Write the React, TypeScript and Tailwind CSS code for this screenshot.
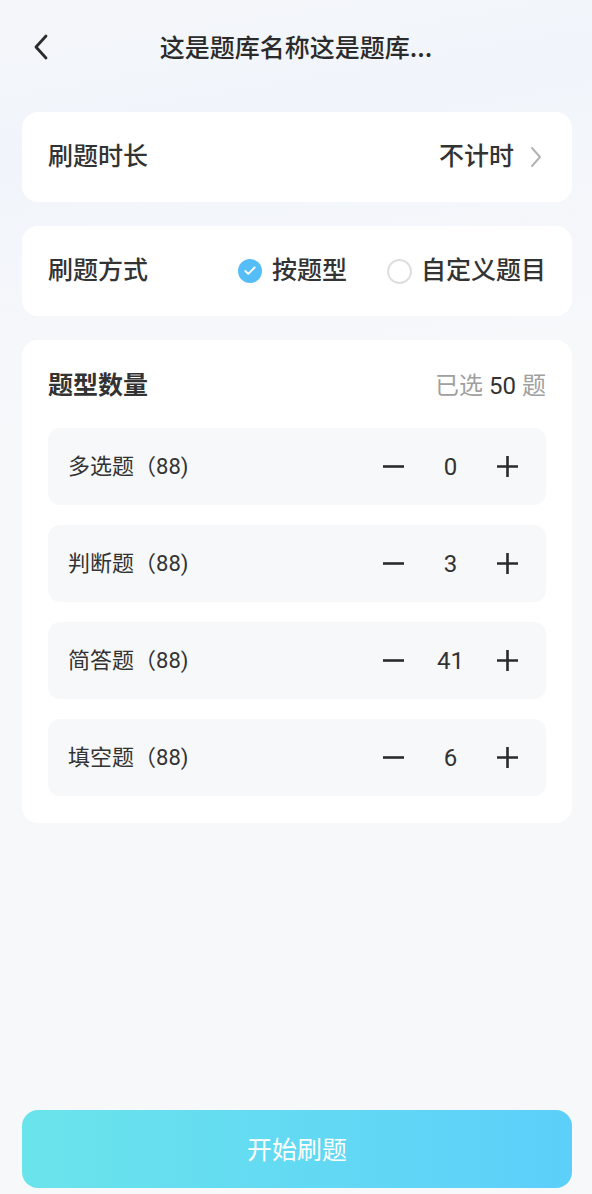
import { Check } from 'lucide-react';

// Types
interface QuestionType {
  name: string;
  total: number;
  count: number;
}

const questionTypes: QuestionType[] = [
  { name: '多选题', total: 88, count: 0 },
  { name: '判断题', total: 88, count: 3 },
  { name: '简答题', total: 88, count: 41 },
  { name: '填空题', total: 88, count: 6 },
];

function MinusIcon() {
  return (
    <svg width="23" height="23" viewBox="0 0 23 23" fill="none">
      <path d="M1 11.5h21" stroke="#2b2b2b" strokeWidth="2.6" />
    </svg>
  );
}

function PlusIcon() {
  return (
    <svg width="23" height="23" viewBox="0 0 23 23" fill="none">
      <path d="M1 11.5h21M11.5 1v21" stroke="#2b2b2b" strokeWidth="2.6" />
    </svg>
  );
}

export default function App() {
  const selected = questionTypes.reduce((sum, q) => sum + q.count, 0);

  return (
    <div className="w-full min-h-[1194px] flex flex-col bg-[#f7f8fa] bg-[linear-gradient(170deg,#f4f6f9_0px,#f1f5fb_160px,#f7f8fa_420px)] text-[#333] font-['Roboto','Noto_Sans_CJK_SC',sans-serif]">
      {/* Header */}
      <header className="h-[94px] grid grid-cols-[1fr_auto_1fr] items-center">
        <div className="pl-[33px]">
          <svg width="16" height="26" viewBox="0 0 16 26" fill="none">
            <path d="M13 2 L3 13 L13 24" stroke="#2b2b2b" strokeWidth="2.8" strokeLinecap="round" strokeLinejoin="round" />
          </svg>
        </div>
        <h1 className="text-[25px] font-medium text-[#2b2b2b] font-['Noto_Sans_CJK_SC',sans-serif]">这是题库名称这是题库...</h1>
        <div />
      </header>

      <main className="pl-[22px] pr-[20px] mt-[18px] flex flex-col gap-[24px]">
        {/* 刷题时长 */}
        <section className="h-[90px] bg-white rounded-[16px] pl-[26px] pr-[30px] flex items-center justify-between">
          <span className="text-[25px] font-medium">刷题时长</span>
          <div className="flex items-center gap-[16px]">
            <span className="text-[25px] font-medium">不计时</span>
            <svg width="12" height="22" viewBox="0 0 12 22" fill="none">
              <path d="M2 2 L10 11 L2 20" stroke="#b3b3b3" strokeWidth="2" strokeLinecap="round" strokeLinejoin="round" />
            </svg>
          </div>
        </section>

        {/* 刷题方式 */}
        <section className="h-[90px] bg-white rounded-[16px] pl-[26px] pr-[26px] flex items-center justify-between">
          <span className="text-[25px] font-medium">刷题方式</span>
          <div className="flex items-center">
            <div className="flex items-center gap-[10px]">
              <span className="w-[24px] h-[24px] rounded-full bg-[#55bdf8] flex items-center justify-center">
                <Check size={14} strokeWidth={3.2} className="text-white" />
              </span>
              <span className="text-[25px] font-medium">按题型</span>
            </div>
            <div className="flex items-center gap-[9px] ml-[40px]">
              <span className="w-[25px] h-[25px] rounded-full border-2 border-[#dedede]" />
              <span className="text-[25px] font-medium">自定义题目</span>
            </div>
          </div>
        </section>

        {/* 题型数量 */}
        <section className="bg-white rounded-[16px] px-[26px] pt-[30px] pb-[27px]">
          <div className="h-[32px] flex items-center justify-between">
            <span className="text-[25px] font-semibold">题型数量</span>
            <span className="text-[24px] text-[#a0a0a0]">
              已选 <span className="text-[#333]">{selected}</span> 题
            </span>
          </div>
          <div className="mt-[26px] flex flex-col gap-[20px]">
            {questionTypes.map((q) => (
              <div key={q.name} className="h-[77px] bg-[#f7f8fa] rounded-[12px] pl-[20px] pr-[27px] flex items-center justify-between">
                <span className="text-[22px]">{q.name}（{q.total})</span>
                <div className="flex items-center">
                  <MinusIcon />
                  <span className="w-[91px] text-center text-[24px]">{q.count}</span>
                  <PlusIcon />
                </div>
              </div>
            ))}
          </div>
        </section>
      </main>

      {/* Start button */}
      <div className="mt-auto pl-[22px] pr-[20px] pb-[6px]">
        <button className="w-full h-[78px] rounded-[16px] bg-gradient-to-r from-[#6ae4eb] to-[#5ccffa] text-white text-[25px] font-['Noto_Sans_CJK_SC',sans-serif]">
          开始刷题
        </button>
      </div>
    </div>
  );
}
